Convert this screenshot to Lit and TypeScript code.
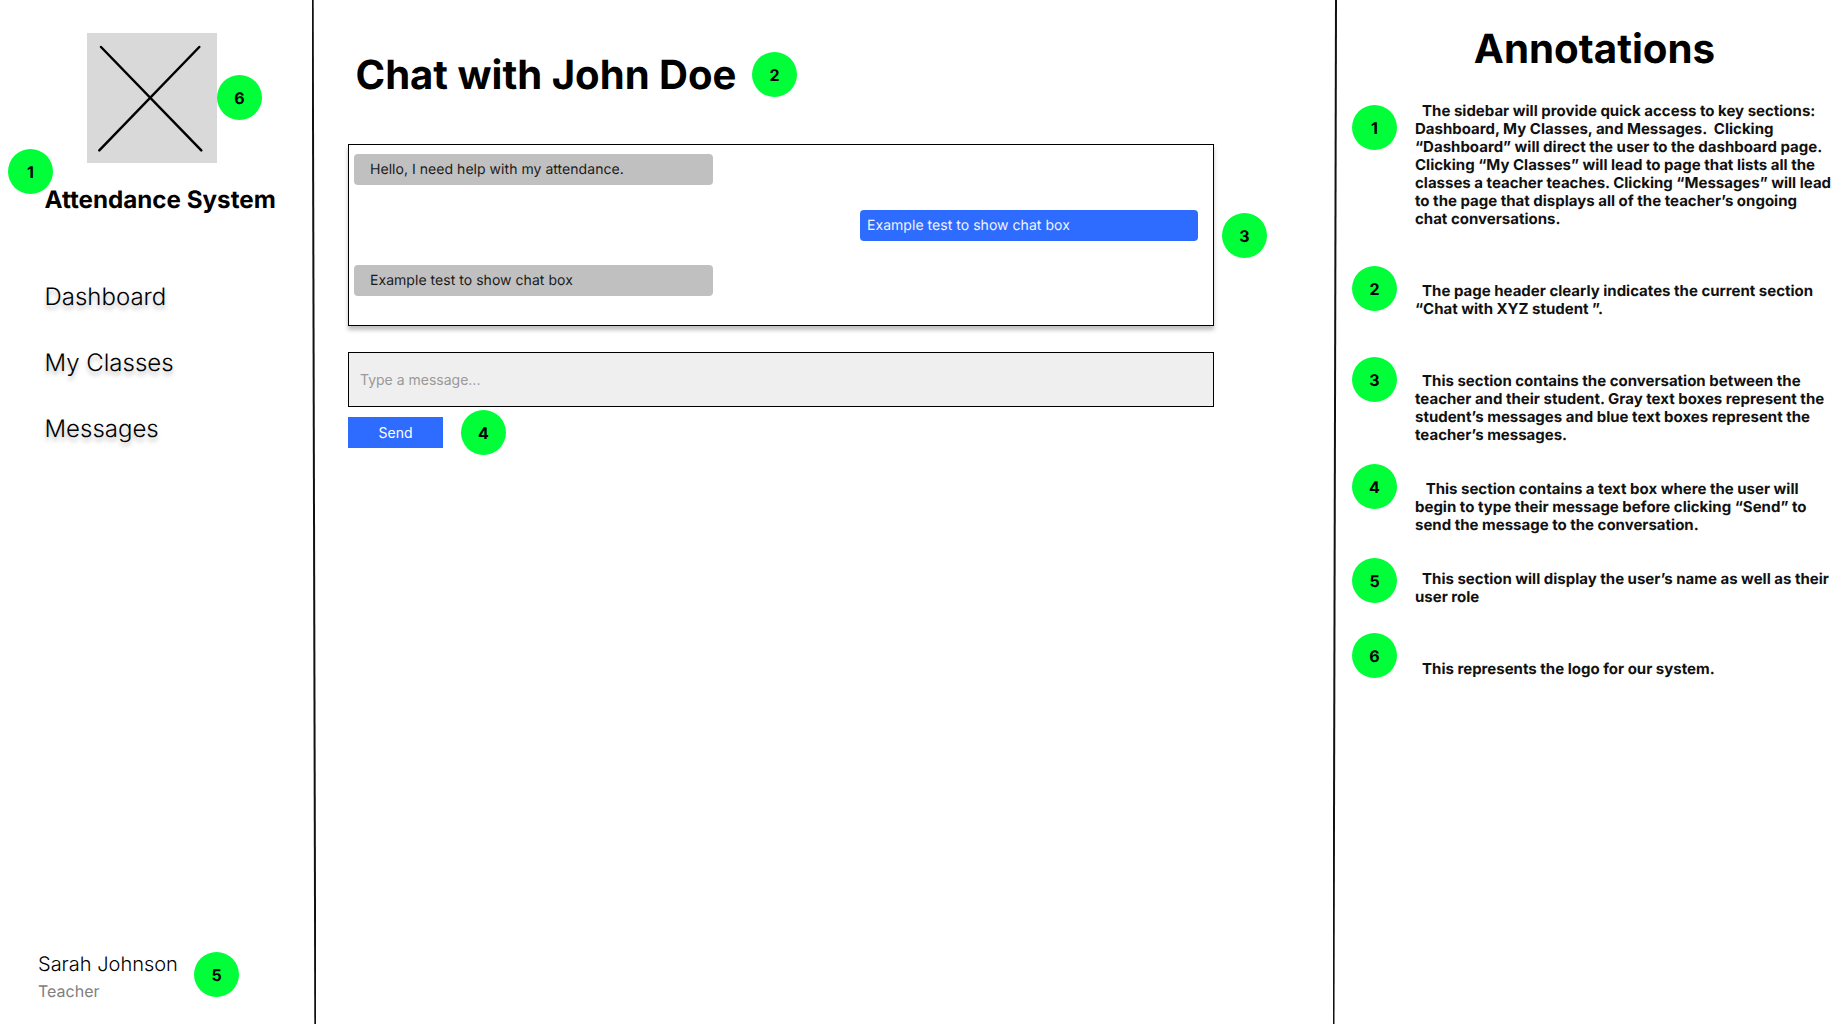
import { LitElement, html, css } from 'lit';
import { customElement } from 'lit/decorators.js';

const MARKS = [
    { n: 1, x: 8, y: 149 },
    { n: 6, x: 217, y: 75 },
    { n: 2, x: 752, y: 52 },
    { n: 3, x: 1222, y: 213 },
    { n: 4, x: 461, y: 410 },
    { n: 5, x: 194, y: 952 },
];

const NOTES = [
    { n: 1, offset: -3, text: '  The sidebar will provide quick access to key sections:\nDashboard, My Classes, and Messages.  Clicking\n“Dashboard” will direct the user to the dashboard page.\nClicking “My Classes” will lead to page that lists all the\nclasses a teacher teaches. Clicking “Messages” will lead\nto the page that displays all of the teacher’s ongoing\nchat conversations.' },
    { n: 2, offset: 16, text: '  The page header clearly indicates the current section\n“Chat with XYZ student ”.' },
    { n: 3, offset: 15, text: '  This section contains the conversation between the\nteacher and their student. Gray text boxes represent the\nstudent’s messages and blue text boxes represent the\nteacher’s messages.' },
    { n: 4, offset: 16, text: '   This section contains a text box where the user will\nbegin to type their message before clicking “Send” to\nsend the message to the conversation.' },
    { n: 5, offset: 12, text: '  This section will display the user’s name as well as their\nuser role' },
    { n: 6, offset: 27, text: '  This represents the logo for our system.' },
];

@customElement('app-root')
export class AppRoot extends LitElement {
    static styles = css`
        :host {
            display: flex;
            position: relative;
            width: 1848px;
            height: 1024px;
            overflow: hidden;
            background: #fff;
            color: #000;
            font-family: Inter, "Liberation Sans", sans-serif;
            text-rendering: geometricPrecision;
        }
        .rule {
            flex: 0 0 4px;
            width: 4px;
            height: 1024px;
        }
        .rule line {
            stroke: #111;
            stroke-width: 2;
        }
        .badge {
            display: flex;
            align-items: center;
            justify-content: center;
            width: 45px;
            height: 45px;
            border-radius: 50%;
            background: #00ff38;
            font-size: 16px;
            font-weight: 700;
        }
        .mark {
            position: absolute;
        }

        .sidebar {
            flex: 0 0 312px;
            display: flex;
            flex-direction: column;
            box-sizing: border-box;
            padding: 33px 0 23px 44.5px;
        }
        .logo {
            display: block;
            width: 130px;
            height: 130px;
            margin-left: 42.5px;
        }
        .brand {
            margin: 22px 0 0;
            font-size: 24.2px;
            font-weight: 700;
            line-height: 29px;
        }
        .nav {
            display: flex;
            flex-direction: column;
            gap: 37px;
            margin-top: 68px;
            font-weight: 350;
        }
        .nav a {
            font-size: 24px;
            line-height: 29px;
            text-shadow: 0 4px 4px rgba(0, 0, 0, 0.25);
        }
        .user {
            margin: auto 0 0 -6.5px;
        }
        .user-name {
            font-size: 20px;
            font-weight: 350;
            line-height: 24px;
        }
        .user-role {
            margin-top: 5px;
            font-size: 16px;
            line-height: 20px;
            color: #808080;
        }

        .main {
            flex: 0 0 1017px;
            box-sizing: border-box;
            padding: 51px 119px 0 32px;
        }
        .main h1 {
            margin: 0 0 45px 7.5px;
            font-size: 40.1px;
            font-weight: 700;
            line-height: 48px;
        }
        .chat {
            display: flex;
            flex-direction: column;
            gap: 24px;
            box-sizing: border-box;
            height: 182px;
            padding: 8.5px 15px 0 4.5px;
            border: 1.5px solid #000;
            box-shadow: 0 4px 4px rgba(0, 0, 0, 0.25);
        }
        .bubble {
            box-sizing: border-box;
            height: 31px;
            border-radius: 4px;
            font-size: 14px;
            letter-spacing: 0.04px;
            line-height: 31px;
        }
        .them {
            width: 359px;
            padding-left: 16.5px;
            background: #c0c0c0;
            color: #1a1a1a;
        }
        .me {
            align-self: flex-end;
            width: 338px;
            margin-top: 1px;
            padding-left: 7px;
            background: #2e6bff;
            color: #f0f4ff;
        }
        .input {
            display: block;
            box-sizing: border-box;
            width: 100%;
            height: 55px;
            margin-top: 26px;
            padding: 0 11px;
            border: 1.5px solid #000;
            border-radius: 0;
            outline: none;
            background: #efefef;
            font: 14px Inter, "Liberation Sans", sans-serif;
        }
        .input::placeholder {
            color: #999;
        }
        .send {
            display: block;
            width: 95px;
            height: 31px;
            margin-top: 10px;
            padding: 0;
            border: 0;
            background: #2e6bff;
            color: #fff;
            font: 14px Inter, "Liberation Sans", sans-serif;
        }

        .notes {
            flex: 1;
            box-sizing: border-box;
            padding: 25px 0 0 15px;
        }
        .notes h2 {
            margin: 0 0 32px;
            padding-right: 11px;
            font-size: 40.3px;
            font-weight: 700;
            line-height: 48px;
            text-align: center;
        }
        .list {
            display: grid;
            grid-template-rows: 161px 91px 107px 94px 75px auto;
        }
        .note {
            display: flex;
            align-items: flex-start;
            gap: 18px;
        }
        .note .badge {
            flex: none;
        }
        .note p {
            margin: 0;
            font-size: 15px;
            font-weight: 700;
            line-height: 18px;
            white-space: pre;
            color: #111;
        }
    `;

    render() {
        return html`
            <aside class="sidebar">
                <svg class="logo" viewBox="0 0 130 130">
                    <rect width="130" height="130" fill="#d9d9d9"></rect>
                    <path d="M14 14 114.3 117.3M112.3 14 12.3 117.3" fill="none" stroke="#000" stroke-width="2.5" stroke-linecap="round"></path>
                </svg>
                <div class="brand">Attendance System</div>
                <nav class="nav">
                    <a>Dashboard</a>
                    <a>My Classes</a>
                    <a>Messages</a>
                </nav>
                <div class="user">
                    <div class="user-name">Sarah Johnson</div>
                    <div class="user-role">Teacher</div>
                </div>
            </aside>
            <svg class="rule" viewBox="0 0 4 1024"><line x1="0.7" y1="0" x2="3.3" y2="1024"></line></svg>
            <main class="main">
                <h1>Chat with John Doe</h1>
                <div class="chat">
                    <div class="bubble them">Hello, I need help with my attendance.</div>
                    <div class="bubble me">Example test to show chat box</div>
                    <div class="bubble them">Example test to show chat box</div>
                </div>
                <input class="input" placeholder="Type a message..." />
                <button class="send">Send</button>
            </main>
            <svg class="rule" viewBox="0 0 4 1024"><line x1="3" y1="0" x2="0.5" y2="1024"></line></svg>
            <section class="notes">
                <h2>Annotations</h2>
                <div class="list">
                    ${NOTES.map(note => html`
                        <div class="note">
                            <div class="badge">${note.n}</div>
                            <p style="margin-top: ${note.offset}px">${note.text}</p>
                        </div>
                    `)}
                </div>
            </section>
            ${MARKS.map(mark => html`
                <div class="badge mark" style="left: ${mark.x}px; top: ${mark.y}px">${mark.n}</div>
            `)}
        `;
    }
}
